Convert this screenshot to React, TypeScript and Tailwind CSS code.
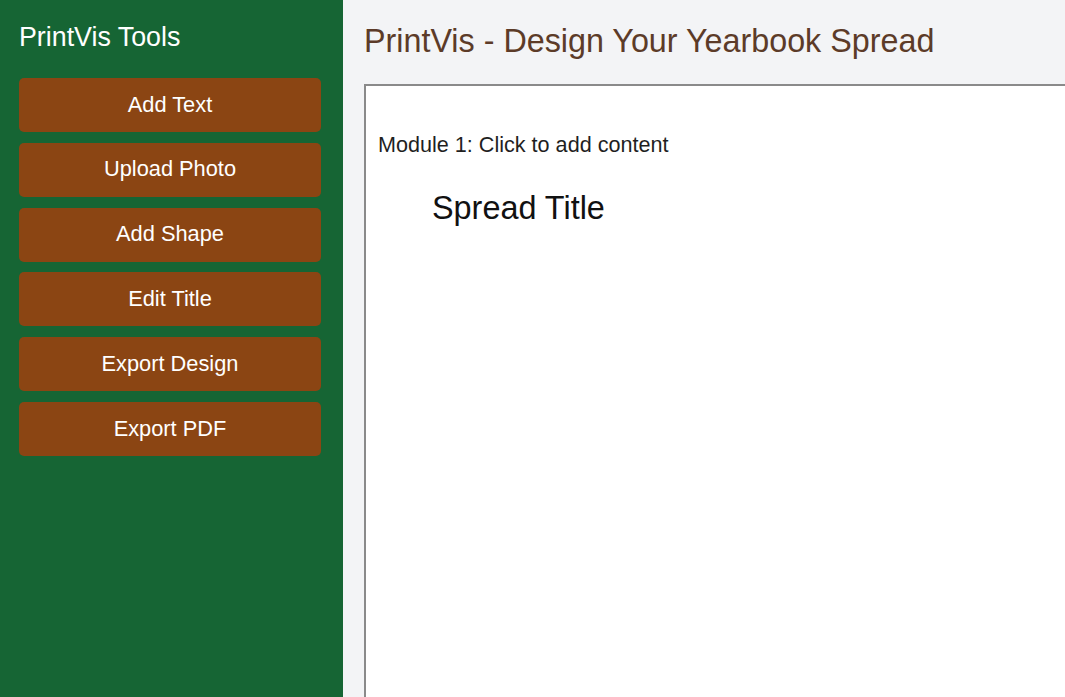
import React from "react";

const tools = ["Add Text", "Upload Photo", "Add Shape", "Edit Title", "Export Design", "Export PDF"];

export default function App() {
  return (
    <div
      className="flex h-[697px] w-full overflow-hidden bg-[#f3f4f6]"
      style={{ fontFamily: '"Liberation Sans", Arial, sans-serif' }}
    >
      <aside className="flex w-[343px] shrink-0 flex-col bg-[#166534] px-[19px] pt-[23px]">
        <h2 className="mb-[26px] text-[26.8px] font-normal leading-[29px] text-white">PrintVis Tools</h2>
        <div className="flex flex-col gap-[10.8px]">
          {tools.map((t) => (
            <button
              key={t}
              className="flex h-[54px] w-[302px] items-center justify-center rounded-[5px] bg-[#8b4513] text-[21.8px] text-white"
            >
              {t}
            </button>
          ))}
        </div>
      </aside>
      <main className="flex min-w-0 flex-1 flex-col pl-[21px] pt-[23px]">
        <h1 className="mb-[24px] whitespace-nowrap text-[32.3px] font-normal leading-[37px] text-[#5c3b28]">
          PrintVis - Design Your Yearbook Spread
        </h1>
        <div className="relative h-[800px] w-[900px] shrink-0 border-2 border-[#8a8a8a] bg-white">
          <div className="absolute left-[12px] top-[46px] whitespace-nowrap text-[21.6px] leading-[25px] text-[#1f1f1f]">
            Module 1: Click to add content
          </div>
          <div className="absolute left-[66px] top-[104px] whitespace-nowrap text-[32.4px] leading-[37px] text-[#111111]">
            Spread Title
          </div>
        </div>
      </main>
    </div>
  );
}
